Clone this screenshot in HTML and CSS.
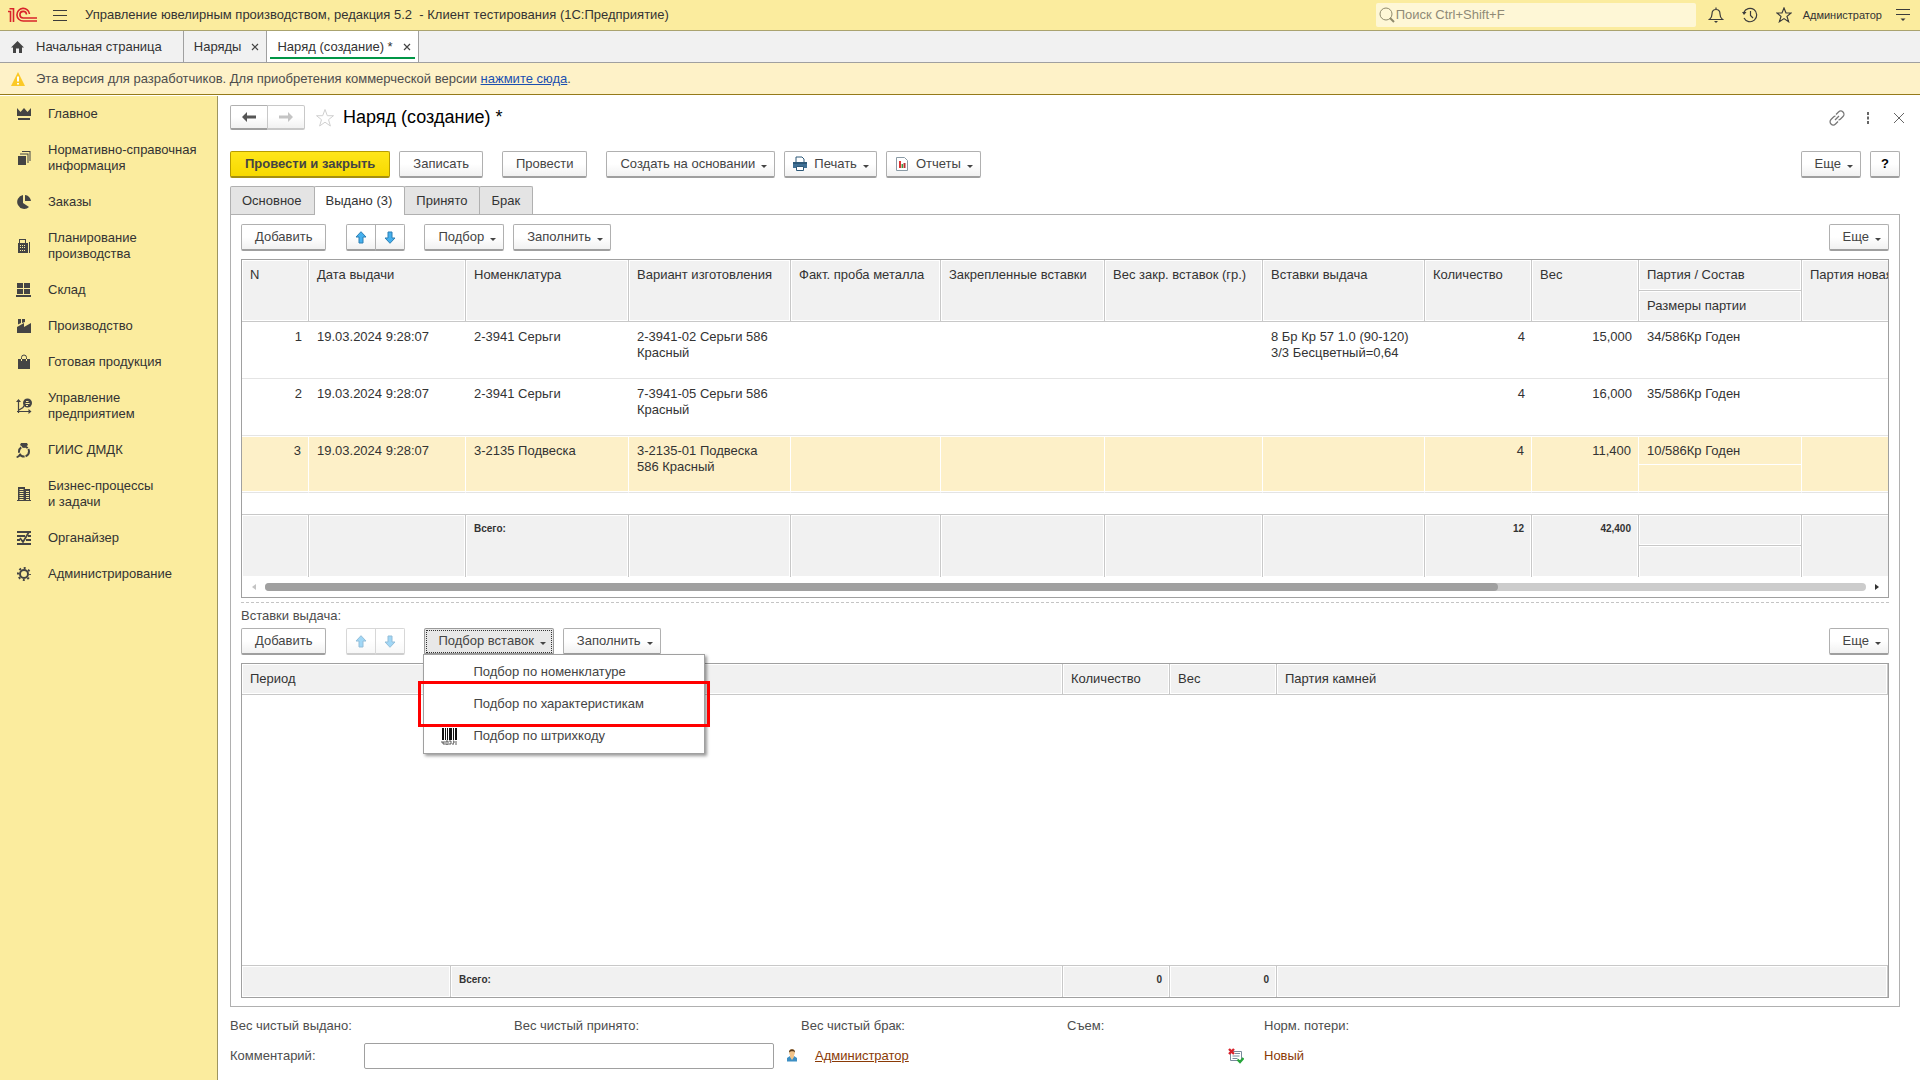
FILE: index.html
```html
<!DOCTYPE html>
<html lang="ru">
<head>
<meta charset="utf-8">
<title>Наряд (создание) *</title>
<link rel="stylesheet" href="styles.css">
</head>
<body>
<header class="topbar">
  <svg class="logo" width="30" height="16" viewBox="0 0 30 16" fill="none" stroke="#d9232a" stroke-width="1.600"><path d="M0 4.500h2.500V15M1.500 1.800h4V15"/><path d="M21.500 7A6.300 6.300 0 1 0 15.200 14H29"/><path d="M18.500 7.500A3.300 3.300 0 1 0 15.200 11H29"/></svg>
  <button class="icon-btn" aria-label="Меню"><svg width="14" height="13" viewBox="0 0 14 13" stroke="#3b3b3b"><path d="M0 1.500h14M0 6.500h14M0 11.500h14"/></svg></button>
  <span class="app-title">Управление ювелирным производством, редакция 5.2 &nbsp;- Клиент тестирования (1С:Предприятие)</span>
  <label class="search"><svg width="16" height="16" viewBox="0 0 16 16" fill="none" stroke="#8f8a6c"><circle cx="7" cy="7" r="6"/><path d="M11 11l4 4" stroke-width="2"/></svg><input type="text" placeholder="Поиск Ctrl+Shift+F" aria-label="Поиск"></label>
  <button class="icon-btn top-ic" aria-label="Уведомления"><svg width="16" height="16" viewBox="0 0 16 16" fill="none" stroke="#3b3b3b" stroke-width="1.200"><path d="M1.500 12.500c2-1.500 2.500-3 2.500-5.500C4 4 5.500 2.500 8 2.500S12 4 12 7c0 2.500.5 4 2.500 5.500zM8 .5v2"/><path d="M6 14h4l-2 2z" fill="#3b3b3b" stroke="none"/></svg></button>
  <button class="icon-btn top-ic" aria-label="История"><svg width="16" height="16" viewBox="0 0 16 16" fill="none" stroke="#3b3b3b" stroke-width="1.200"><path d="M1.800 5.500A6.700 6.700 0 1 1 2 11M8.500 4v4.500l2.500 2.500"/><path d="M0 5h4.500L2 8z" fill="#3b3b3b" stroke="none"/></svg></button>
  <button class="icon-btn top-ic" aria-label="Избранное"><svg width="16" height="16" viewBox="0 0 16 16" fill="none" stroke="#3b3b3b" stroke-width="1.200"><path d="M8 1l2 5h5l-4 3.400 1.600 5.300L8 11.600l-4.600 3.100L5 9.400 1 6h5z"/></svg></button>
  <span class="user">Администратор</span>
  <button class="icon-btn" aria-label="Настройки"><svg width="14" height="14" viewBox="0 0 14 14" stroke="#3b3b3b"><path d="M0 1.500h14M0 6.500h14"/><path d="M4.500 10.500h5L7 13z" fill="#3b3b3b" stroke="none"/></svg></button>
</header>

<nav class="win-tabs">
  <a class="win-tab home" href="#"><svg width="13" height="12" viewBox="0 0 13 12" fill="#444"><path d="M6.500 0L13 6.500h-2V12H8V7.500H5V12H2V6.500H0z"/></svg>Начальная страница</a>
  <a class="win-tab" href="#">Наряды<svg class="x" width="8" height="8" viewBox="0 0 8 8" stroke="#444" stroke-width="1.200"><path d="M1 1l6 6M7 1L1 7"/></svg></a>
  <a class="win-tab active" href="#">Наряд (создание) *<svg class="x" width="8" height="8" viewBox="0 0 8 8" stroke="#444" stroke-width="1.200"><path d="M1 1l6 6M7 1L1 7"/></svg></a>
</nav>

<div class="notice">
  <svg width="14" height="14" viewBox="0 0 14 14"><path d="M7 0l7 14H0z" fill="#fbc926"/><path d="M6 4.500h2v5H6zM6 11h2v1.500H6z" fill="#fff"/></svg>
  <span>Эта версия для разработчиков. Для приобретения коммерческой версии <a href="#">нажмите сюда</a>.</span>
</div>

<div class="workspace">
  <nav class="sidebar">
    <a href="#"><svg width="16" height="16" viewBox="0 0 16 16"><path d="M1 2l3.500 4L8 2l3.500 4L15 2v8H1zM2 12h12v2H2z"/></svg><span>Главное</span></a>
    <a href="#"><svg width="16" height="16" viewBox="0 0 16 16"><path d="M2 6h8v9H2zM4 3.500h8.500V13h-1V4.500H4zM6 1h8.500v10h-1V2H6z"/></svg><span>Нормативно-справочная<br>информация</span></a>
    <a href="#"><svg width="16" height="16" viewBox="0 0 16 16"><path d="M7 1v8l6 4A7 7 0 1 1 7 1zM9 1a6.500 6.500 0 0 1 6 6H9z"/></svg><span>Заказы</span></a>
    <a href="#"><svg width="16" height="16" viewBox="0 0 16 16"><path fill-rule="evenodd" d="M2 5h1V1h7v4h2v10H2zM4 2v3h5V2zM4 7v1h1V7zM6 7v1h1V7zM8 7v1h1V7zM4 9v1h1V9zM6 9v1h1V9zM8 9v1h1V9zM4 12v1h1v-1zM6 12v1h1v-1zM8 12v1h1v-1zM13 4h1v11h-1z"/></svg><span>Планирование<br>производства</span></a>
    <a href="#"><svg width="16" height="16" viewBox="0 0 16 16"><path d="M1 1h6v5H1zM8 1h6v5H8zM1 7h6v5H1zM8 7h6v5H8zM0 13h15v2H0z"/></svg><span>Склад</span></a>
    <a href="#"><svg width="16" height="16" viewBox="0 0 16 16"><path d="M2 1h3v4L2 6.500zM6 1h3v3L6 5zM1 9l7-4v4l7-4v10H1z"/></svg><span>Производство</span></a>
    <a href="#"><svg width="16" height="16" viewBox="0 0 16 16"><path d="M2 5h12v10H2z"/><path d="M5.500 5V3.500a2.500 2.500 0 0 1 5 0V5" fill="none" stroke="#444"/><path d="M5.500 5v2M10.500 5v2" stroke="#fbec9e"/></svg><span>Готовая продукция</span></a>
    <a href="#"><svg width="16" height="16" viewBox="0 0 16 16"><path d="M2.500 15V2M1 13.500h13M3 12l4-2.500 1-2" fill="none" stroke="#444" stroke-width="1.200"/><path d="M0 4l2.500-3L5 4zM12.500 11l3 2.500-3 2.500z"/><circle cx="11.500" cy="5" r="4.500"/><path d="M10 3.500h2.500M9.500 5.500h4M10 7.500h2" stroke="#fbec9e"/></svg><span>Управление<br>предприятием</span></a>
    <a href="#"><svg width="16" height="16" viewBox="0 0 16 16"><circle cx="8" cy="9.500" r="5" fill="none" stroke="#444" stroke-width="2" stroke-dasharray="6 1"/><path d="M5 1h6l1 2-4 3-4-3zM4 12l1.500 1.500L1.500 16 0 15z"/></svg><span>ГИИС ДМДК</span></a>
    <a href="#"><svg width="16" height="16" viewBox="0 0 16 16"><path fill-rule="evenodd" d="M2 1h7v2h5v11h1v1H1v-1h1zM3.500 3v1h4V3zM3.500 5v1h4V5zM3.500 7v1h4V7zM3.500 9v1h4V9zM3.500 11v1h4v-1zM3.500 13v1h4v-1zM10 5v1h3V5zM10 7v1h3V7zM10 9v1h3V9zM10 11v1h3v-1zM10 13v1h3v-1z"/></svg><span>Бизнес-процессы<br>и задачи</span></a>
    <a href="#"><svg width="16" height="16" viewBox="0 0 16 16"><path d="M1 2h14M1 6h8M12 6h3M1 10h3M10 10h5M1 14h14M4 8l3 4 6-10" fill="none" stroke="#444" stroke-width="1.800"/></svg><span>Органайзер</span></a>
    <a href="#"><svg width="16" height="16" viewBox="0 0 16 16"><circle cx="8" cy="8" r="4" fill="none" stroke="#444" stroke-width="2"/><circle cx="8" cy="8" r="6" fill="none" stroke="#444" stroke-width="2" stroke-dasharray="2 2.710" stroke-dashoffset="1"/></svg><span>Администрирование</span></a>
  </nav>

  <main class="form">
    <div class="title-row">
      <div class="pair">
        <button class="btn nav-btn" aria-label="Назад"><svg width="14" height="10" viewBox="0 0 14 10"><path d="M0 5l5-5v3.500h9v3H5V10z" fill="#555"/></svg></button>
        <button class="btn nav-btn dim" aria-label="Вперед"><svg width="14" height="10" viewBox="0 0 14 10"><path d="M14 5L9 0v3.500H0v3h9V10z" fill="#c4c4c4"/></svg></button>
      </div>
      <svg width="20" height="20" viewBox="0 0 20 20" fill="none" stroke="#d0d0d0"><path d="M10 1.500l2.300 6.200h6.200l-5 4 1.900 6.300-5.400-3.800L4.600 18l1.900-6.300-5-4h6.200z"/></svg>
      <h1>Наряд (создание) *</h1>
      <div class="title-tools">
        <button class="icon-btn" aria-label="Ссылка"><svg width="16" height="16" viewBox="0 0 16 16" fill="none" stroke="#777" stroke-width="1.300"><path d="M7 4.500l2.500-2.500a3 3 0 0 1 4.500 4.500L11.500 9a2.500 2.500 0 0 1-2 .8M9 11.500L6.500 14A3 3 0 0 1 2 9.500L4.500 7a2.500 2.500 0 0 1 2-.8M6 10l4-4"/></svg></button>
        <button class="icon-btn" aria-label="Действия"><svg width="16" height="12" viewBox="0 0 16 12" fill="#666"><path d="M7 0h2v3H7zM7 4.500h2v3H7zM7 9h2v3H7z"/></svg></button>
        <button class="icon-btn" aria-label="Закрыть"><svg width="16" height="10" viewBox="0 0 16 10" stroke="#666"><path d="M3 0l10 10M13 0L3 10"/></svg></button>
      </div>
    </div>

    <div class="commands">
      <button class="btn primary">Провести и закрыть</button>
      <button class="btn">Записать</button>
      <button class="btn spaced">Провести</button>
      <button class="btn drop spaced">Создать на основании<i class="caret"></i></button>
      <button class="btn drop with-icon"><svg width="16" height="16" viewBox="0 0 16 16"><path d="M4 1h6l2 2v4H4z" fill="#fff" stroke="#2d5878"/><path d="M1 6h14v6H1z" fill="#3f6f94"/><path d="M1 6h14v2H1z" fill="#2d5878"/><path d="M4.500 10.500h7v4h-7z" fill="#fff" stroke="#2d5878"/></svg>Печать<i class="caret"></i></button>
      <button class="btn drop with-icon"><svg width="16" height="16" viewBox="0 0 16 16"><path d="M2.500 1.500h8l3 3v10h-11z" fill="#fff" stroke="#8a9aa5"/><path d="M5 5h2v7H5z" fill="#d33"/><path d="M7.500 8h1.500v4H7.500z" fill="#3a9a44"/><path d="M9.500 7h2v5h-2z" fill="#b33"/></svg>Отчеты<i class="caret"></i></button>
      <button class="btn drop more">Еще<i class="caret"></i></button>
      <button class="btn help">?</button>
    </div>

    <div class="page-tabs">
      <button class="page-tab">Основное</button><button class="page-tab active">Выдано (3)</button><button class="page-tab">Принято</button><button class="page-tab">Брак</button>
    </div>

    <section class="panel">
      <div class="toolbar">
        <button class="btn">Добавить</button>
        <div class="pair">
          <button class="btn arrow" aria-label="Вверх"><svg width="12" height="13" viewBox="0 0 12 13"><path d="M6 .7l5 5.300H8v6H4V6H1z" fill="#45b0ee" stroke="#2c7fb3"/></svg></button>
          <button class="btn arrow" aria-label="Вниз"><svg width="12" height="13" viewBox="0 0 12 13"><path d="M6 12.300l5-5.300H8V1H4v6H1z" fill="#45b0ee" stroke="#2c7fb3"/></svg></button>
        </div>
        <button class="btn drop">Подбор<i class="caret"></i></button>
        <button class="btn drop">Заполнить<i class="caret"></i></button>
        <button class="btn drop more">Еще<i class="caret"></i></button>
      </div>

      <div class="grid-box">
        <div class="clip">
        <table class="grid issued">
          <colgroup><col class="w-n"><col class="w-date"><col class="w-item"><col class="w-var"><col class="w-probe"><col class="w-fixed"><col class="w-sum"><col class="w-var"><col class="w-qty"><col class="w-qty"><col class="w-item"><col class="w-item"></colgroup>
          <thead>
            <tr><th rowspan="2">N</th><th rowspan="2">Дата выдачи</th><th rowspan="2">Номенклатура</th><th rowspan="2">Вариант изготовления</th><th rowspan="2">Факт. проба металла</th><th rowspan="2">Закрепленные вставки</th><th rowspan="2">Вес закр. вставок (гр.)</th><th rowspan="2">Вставки выдача</th><th rowspan="2">Количество</th><th rowspan="2">Вес</th><th>Партия / Состав</th><th rowspan="2">Партия новая</th></tr>
            <tr><th>Размеры партии</th></tr>
          </thead>
          <tbody>
            <tr><td class="num">1</td><td>19.03.2024 9:28:07</td><td>2-3941 Серьги</td><td>2-3941-02 Серьги 586 Красный</td><td></td><td></td><td></td><td>8 Бр Кр 57 1.0 (90-120) 3/3 Бесцветный=0,64</td><td class="num">4</td><td class="num">15,000</td><td>34/586Кр Годен</td><td></td></tr>
            <tr><td class="num">2</td><td>19.03.2024 9:28:07</td><td>2-3941 Серьги</td><td>7-3941-05 Серьги 586 Красный</td><td></td><td></td><td></td><td></td><td class="num">4</td><td class="num">16,000</td><td>35/586Кр Годен</td><td></td></tr>
            <tr class="current"><td class="num">3</td><td>19.03.2024 9:28:07</td><td>3-2135 Подвеска</td><td>3-2135-01 Подвеска 586 Красный</td><td></td><td></td><td></td><td></td><td class="num">4</td><td class="num">11,400</td><td class="split"><div>10/586Кр Годен</div></td><td></td></tr>
            <tr class="filler"><td colspan="12"></td></tr>
          </tbody>
          <tfoot>
            <tr><td rowspan="2"></td><td rowspan="2"></td><td rowspan="2">Всего:</td><td rowspan="2"></td><td rowspan="2"></td><td rowspan="2"></td><td rowspan="2"></td><td rowspan="2"></td><td rowspan="2" class="num">12</td><td rowspan="2" class="num">42,400</td><td></td><td rowspan="2"></td></tr>
            <tr><td></td></tr>
          </tfoot>
        </table>
        </div>
        <div class="hscroll">
          <svg width="4" height="8" viewBox="0 0 4 8"><path d="M4 1v6L0 4z" fill="#c4c4c4"/></svg>
          <div class="track"><div class="thumb"></div></div>
          <svg width="4" height="8" viewBox="0 0 4 8"><path d="M0 1v6l4-3z" fill="#333"/></svg>
        </div>
      </div>

      <div class="splitter"></div>
      <div class="caption">Вставки выдача:</div>

      <div class="toolbar">
        <button class="btn">Добавить</button>
        <div class="pair faded">
          <button class="btn arrow" aria-label="Вверх" disabled><svg width="12" height="13" viewBox="0 0 12 13"><path d="M6 .7l5 5.300H8v6H4V6H1z" fill="#45b0ee" stroke="#2c7fb3"/></svg></button>
          <button class="btn arrow" aria-label="Вниз" disabled><svg width="12" height="13" viewBox="0 0 12 13"><path d="M6 12.300l5-5.300H8V1H4v6H1z" fill="#45b0ee" stroke="#2c7fb3"/></svg></button>
        </div>
        <div class="menu-anchor">
          <button class="btn drop pressed">Подбор вставок<i class="caret"></i></button>
          <div class="menu">
            <button><span class="menu-ic"></span>Подбор по номенклатуре</button>
            <button><span class="menu-ic"></span>Подбор по характеристикам</button>
            <button><span class="menu-ic"><svg width="16" height="17" viewBox="0 0 16 17"><path d="M1 0h2v12H1zM4 0h1v12H4zM6 0h1v12H6zM8 0h3v12H8zM12 0h1v12h-1zM14 0h2v12h-2z" fill="#111"/><path d="M1 13v2h2M3 13v4M5 13h2v4H5zM8 13h2v3H8M12 13h1v2h-1v2M15 13v4" fill="none" stroke="#333" stroke-width=".8"/></svg></span>Подбор по штрихкоду</button>
            <div class="highlight"></div>
          </div>
        </div>
        <button class="btn drop">Заполнить<i class="caret"></i></button>
        <button class="btn drop more">Еще<i class="caret"></i></button>
      </div>

      <div class="grid-box grow">
        <table class="grid inserts">
          <colgroup><col class="w-period"><col class="w-insert"><col class="w-qty"><col class="w-qty"><col></colgroup>
          <thead><tr><th>Период</th><th></th><th>Количество</th><th>Вес</th><th>Партия камней</th></tr></thead>
          <tbody><tr class="filler"><td colspan="5"></td></tr></tbody>
          <tfoot><tr><td></td><td>Всего:</td><td class="num">0</td><td class="num">0</td><td></td></tr></tfoot>
        </table>
      </div>
    </section>

    <div class="totals">
      <span>Вес чистый выдано:</span><span>Вес чистый принято:</span><span>Вес чистый брак:</span><span>Съем:</span><span>Норм. потери:</span>
    </div>
    <div class="comment-row">
      <label for="comment">Комментарий:</label>
      <input id="comment" type="text">
      <svg width="12" height="16" viewBox="0 0 12 16"><path d="M1 13.500V10l3-2h4l3 2v3.500z" fill="#3d8fc4"/><path d="M4 7h4v2l-2 3-2-3z" fill="#f2c48a"/><ellipse cx="6" cy="4.500" rx="2.800" ry="3.500" fill="#f2c48a"/><path d="M3 4.500C2.500 0 9.500 0 9 4.500 8 3 5 2.500 3 4.500z" fill="#5a3b1c"/></svg>
      <a class="brown" href="#">Администратор</a>
      <span class="state"><svg width="16" height="16" viewBox="0 0 16 16"><path d="M2.500 3.500h11v9h-11z" fill="#fff" stroke="#7a8b9c"/><path d="M7 5.500h5M4.500 8h7M4.500 10.500h5" stroke="#7a8b9c"/><path d="M1 1l5 5M6 1L1 6" stroke="#d8212c" stroke-width="2.400"/><path d="M9.500 11.500l2.500 2.500 3.500-4" fill="none" stroke="#27a53b" stroke-width="2.400"/></svg><span class="brown">Новый</span></span>
    </div>
  </main>
</div>
</body>
</html>
```

FILE: styles.css
```css
* { box-sizing: border-box; }

body {
  margin: 0;
  min-height: 100vh;
  display: flex;
  flex-direction: column;
  font: 13px/16px "Liberation Sans", Arial, sans-serif;
  color: #333;
  background: #fff;
}

button, input { font: inherit; color: inherit; }
svg { display: block; flex: none; }

.icon-btn {
  display: flex;
  align-items: center;
  justify-content: center;
  padding: 0;
  border: 0;
  background: none;
}

/* top bar */
.topbar {
  display: flex;
  align-items: center;
  height: 31px;
  padding: 0 10px 0 8px;
  background: #fbec9e;
  border-bottom: 1px solid #aaa36f;
}
.topbar .logo { margin-right: 15px; }
.app-title { margin-left: 18px; flex: 1; white-space: nowrap; }
.search {
  display: flex;
  align-items: center;
  gap: 1px;
  width: 320px;
  height: 24px;
  padding-left: 3px;
  margin-right: 12px;
  border-radius: 2px;
  background: #fef7d6;
}
.search input {
  flex: 1;
  min-width: 0;
  padding: 0;
  border: 0;
  background: none;
  outline: 0;
}
.search input::placeholder { color: #8f8a76; }
.top-ic { width: 16px; margin-right: 18px; }
.user { font-size: 11px; margin: 0 14px 0 -7px; }

/* window tabs */
.win-tabs {
  display: flex;
  height: 32px;
  background: #f1f1f1;
  border-bottom: 1px solid #a0a0a0;
}
.win-tab {
  display: flex;
  align-items: center;
  gap: 10px;
  padding: 0 7px 0 10px;
  border-right: 1px solid #a0a0a0;
  color: #333;
  text-decoration: none;
  white-space: nowrap;
}
.win-tab.home { gap: 12px; padding: 0 21px 0 11px; }
.win-tab.active {
  background: linear-gradient(#009646, #009646) 3px 26px / calc(100% - 6px) 2px no-repeat #fff;
}

/* notice */
.notice {
  display: flex;
  align-items: center;
  gap: 11px;
  height: 32px;
  padding-left: 11px;
  background: #fef2c8;
  border-bottom: 1px solid #957a1a;
  color: #4d4d4d;
}
.notice a { color: #1a4fb0; }

.workspace { display: flex; flex: 1; }

/* section panel */
.sidebar {
  flex: none;
  width: 218px;
  margin-top: 1px;
  background: #fbec9e;
  border-right: 1px solid #9e955f;
}
.sidebar a {
  display: flex;
  align-items: center;
  gap: 16px;
  padding: 10px 0 10px 16px;
  color: #333;
  text-decoration: none;
}
.sidebar svg { fill: #444; }

/* form */
.form {
  flex: 1;
  min-width: 0;
  display: flex;
  flex-direction: column;
  padding: 10px 20px 11px 12px;
}
.btn {
  display: flex;
  align-items: center;
  justify-content: center;
  flex: none;
  height: 27px;
  padding: 0 13px;
  border: 1px solid #b0b0b0;
  border-bottom: 2px solid #9f9f9f;
  border-radius: 2px;
  background: linear-gradient(#fff 50%, #f1f1f1);
  color: #444;
  white-space: nowrap;
}
.drop { padding-right: 7px; }
.caret {
  margin: 4px 0 0 6px;
  border: 3px solid transparent;
  border-top-color: #444;
  border-bottom: 0;
}
.with-icon { gap: 6px; padding-left: 7px; }
.with-icon .caret { margin-left: 0; }
.pair { display: flex; }
.pair .btn:first-child { border-radius: 2px 0 0 2px; }
.pair .btn:last-child { margin-left: -1px; border-radius: 0 2px 2px 0; }
.nav-btn { width: 38px; height: 25px; padding: 0; }
.nav-btn.dim { border-color: #c8c8c8; }

.title-row { display: flex; align-items: center; }
.title-row > svg { margin: 0 8px 0 10px; }
h1 {
  margin: 0;
  padding-bottom: 2px;
  font-size: 18px;
  line-height: 22px;
  font-weight: normal;
  color: #000;
}
.title-tools { display: flex; gap: 15px; margin: 0 -7px 0 auto; }

.commands { display: flex; gap: 9px; margin-top: 21px; }
.primary {
  padding: 0 14px;
  font-weight: bold;
  border-color: #b79c00;
  border-bottom-color: #a58f10;
  background: linear-gradient(#ffe61a, #f7d900);
}
.spaced { margin-left: 10px; }
.more { margin-left: auto; }
.help { width: 30px; padding: 0; color: #000; font-weight: bold; }

.page-tabs { display: flex; margin-top: 8px; }
.page-tab {
  height: 28px;
  padding: 0 12px 0 11px;
  margin-right: -1px;
  border: 1px solid #b0b0b0;
  border-bottom: 0;
  border-radius: 2px 2px 0 0;
  background: #e4e4e4;
}
.page-tab.active { position: relative; background: #fff; height: 29px; margin-bottom: -1px; }

.panel {
  flex: 1;
  display: flex;
  flex-direction: column;
  min-width: 0;
  padding: 9px 10px 8px;
  border: 1px solid #b0b0b0;
}
.toolbar { display: flex; gap: 9px; margin-bottom: 8px; }
.toolbar .pair { margin: 0 10px 0 11px; }
.arrow { width: 30px; padding: 0; }
.faded { opacity: .5; }

/* tables */
.grid-box { border: 1px solid #a0a0a0; min-width: 0; }
.clip { overflow: hidden; }
.grid { table-layout: fixed; border-collapse: separate; border-spacing: 0; }
.issued { width: 1723px; }
.inserts { width: 100%; }
.w-n { width: 67px; }
.w-date { width: 157px; }
.w-item { width: 163px; }
.w-var { width: 162px; }
.w-probe { width: 150px; }
.w-fixed { width: 164px; }
.w-sum { width: 158px; }
.w-qty { width: 107px; }
.w-period { width: 209px; }
.w-insert { width: 612px; }

.grid th, .grid td {
  padding: 7px 8px;
  text-align: left;
  vertical-align: top;
  font-weight: normal;
}
.grid th, .grid tfoot td {
  height: 31px;
  border-right: 1px solid #c8c8c8;
  border-bottom: 1px solid #c8c8c8;
  background: #f1f1f1;
  box-shadow: inset 0 0 0 1px #fff;
}
.grid tbody td { height: 57px; border-bottom: 1px solid #e4e4e4; }
.grid .num { text-align: right; padding-right: 7px; }
.grid tbody .current td {
  background: #fdf0c8;
  border-right: 1px solid #fff;
  box-shadow: inset 0 1px #fff, inset 0 -1px #fff;
}
.grid tbody .split { padding: 7px 0; }
.split div { padding: 0 8px 5px; border-bottom: 1px solid #fff; }
.issued .filler td { height: 22px; padding: 0; border-bottom: 1px solid #c8c8c8; }
.grid tfoot td { font-size: 10px; font-weight: bold; padding-top: 6px; }
.issued tfoot tr:last-child td, .issued tfoot td[rowspan], .inserts tfoot td { border-bottom: 0; }

.hscroll {
  display: flex;
  align-items: center;
  gap: 9px;
  padding: 6px 9px 6px 10px;
}
.track { flex: 1; height: 8px; border-radius: 4px; background: #ccc; }
.thumb { width: 77%; height: 8px; border-radius: 4px; background: #a0a0a0; }

.splitter { margin-top: 4px; border-top: 1px dashed #c4c4c4; }
.caption { margin: 5px 0 4px; color: #4d4d4d; }

.grow { flex: 1; display: flex; }
.inserts .filler td { height: auto; border-bottom: 1px solid #c8c8c8; }

/* drop-down menu */
.menu-anchor { position: relative; }
.pressed {
  background: #e8e8e8;
  border-color: #9a9a9a;
  outline: 1px dotted #333;
  outline-offset: -3px;
}
.menu {
  position: absolute;
  z-index: 2;
  left: -1px;
  top: 26px;
  width: 282px;
  padding: 1px 0;
  border: 1px solid #a0a0a0;
  background: #fff;
  box-shadow: 2px 2px 3px rgba(0, 0, 0, .4);
}
.menu button {
  display: flex;
  align-items: center;
  width: 100%;
  height: 32px;
  padding: 0;
  border: 0;
  background: none;
  color: #444;
}
.menu-ic { display: flex; width: 32px; margin-left: 17px; }
.highlight {
  position: absolute;
  left: -6px;
  top: 26px;
  width: 292px;
  height: 46px;
  border: 3px solid #f00;
}

/* form footer */
.totals {
  display: grid;
  grid-template-columns: 284px 287px 266px 197px auto;
  margin-top: 11px;
  color: #4d4d4d;
}
.comment-row {
  display: grid;
  grid-template-columns: 134px 410px 12px 399px auto;
  align-items: center;
  margin-top: 9px;
  color: #4d4d4d;
}
.comment-row > svg { margin-left: 12px; }
.comment-row > .brown { margin-left: 29px; justify-self: start; }
.comment-row input {
  height: 26px;
  padding: 0 6px;
  border: 1px solid #a0a0a0;
  border-radius: 2px;
}
.brown { color: #8a3a06; }
.state { display: flex; align-items: center; gap: 20px; margin-left: 43px; }
```
